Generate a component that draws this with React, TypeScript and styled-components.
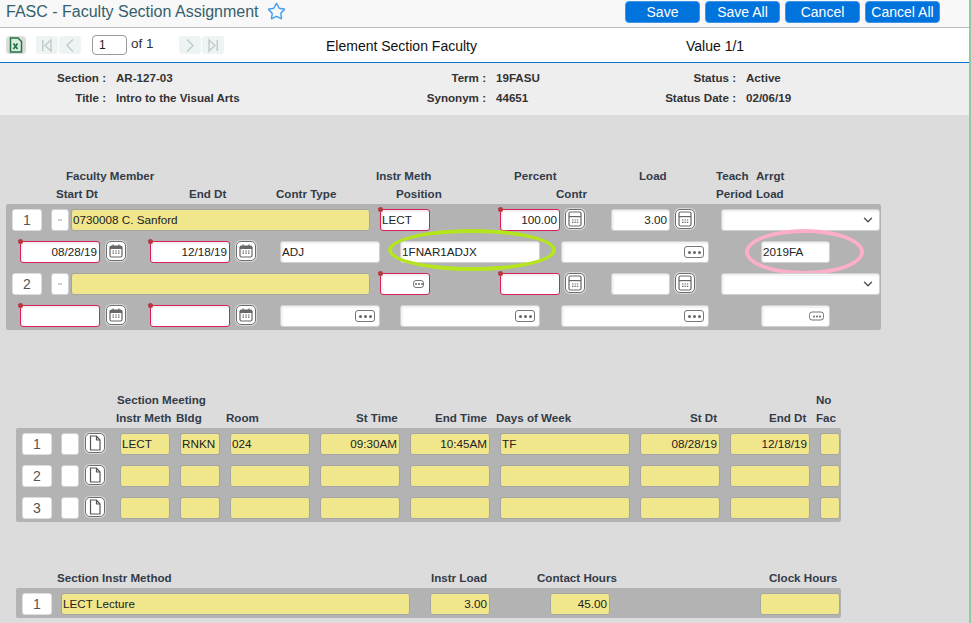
import React from "react";
import styled, { createGlobalStyle } from "styled-components";
import { Star, ChevronDown } from "lucide-react";

const GlobalStyle = createGlobalStyle`
  html, body {
    margin: 0;
    padding: 0;
    background: #dcdcdc;
    overflow: hidden;
  }
  * { box-sizing: border-box; }
`;

const Page = styled.div`
  width: 971px;
  height: 623px;
  overflow: hidden;
  font-family: "Liberation Sans", Arial, sans-serif;
  background: #dcdcdc;
  border-right: 2px solid #8ccf9d;
`;

const TitleBar = styled.div`
  height: 28px;
  display: flex;
  align-items: flex-start;
  padding-left: 6px;
  background: #f8f8f8;
  border-bottom: 1px solid #bcbcbc;
`;

const Title = styled.div`
  font-size: 16px;
  line-height: 23px;
  color: #34606c;
  white-space: nowrap;
`;

const StarIcon = styled(Star)`
  margin: 2px 0 0 8px;
  color: #459ef0;
`;

const Actions = styled.div`
  margin-left: auto;
  margin-right: 29px;
  margin-top: 1px;
  display: flex;
  gap: 5px;
`;

const ActionButton = styled.button`
  width: 75px;
  height: 22px;
  padding: 0;
  border: 1px solid #3f96e6;
  border-radius: 4px;
  background: #0073dc;
  color: #fff;
  font-family: inherit;
  font-size: 14px;
`;

const Toolbar = styled.div`
  height: 35px;
  display: flex;
  align-items: center;
  padding-left: 6px;
  background: #fff;
  border-bottom: 1px solid #0a6fd0;
`;

const ExcelButton = styled.div`
  width: 20px;
  height: 18px;
  border-radius: 4px;
  background: #dcdcdc;
  display: flex;
  align-items: center;
  justify-content: center;
`;

const NavButton = styled.div<{ $ml: number }>`
  width: 22px;
  height: 18px;
  margin-left: ${(p) => p.$ml}px;
  border-radius: 3px;
  background: #eef3f3;
  display: flex;
  align-items: center;
  justify-content: center;
`;

const PageInput = styled.div`
  width: 35px;
  height: 20px;
  margin-left: 11px;
  padding-left: 6px;
  border: 1px solid #9a9a9a;
  border-radius: 4px;
  font-size: 12px;
  line-height: 18px;
  color: #222;
`;

const PageCount = styled.div`
  width: 48px;
  margin-left: 4px;
  margin-top: -3px;
  font-size: 13.5px;
  color: #333;
`;

const Caption = styled.div<{ $w: number; $ml: number }>`
  width: ${(p) => p.$w}px;
  margin-left: ${(p) => p.$ml}px;
  margin-top: 2px;
  font-size: 14px;
  color: #111;
  white-space: nowrap;
`;

const InfoBand = styled.div`
  height: 52px;
  padding-top: 4px;
  background: #eee;
`;

const InfoRow = styled.div`
  height: 20px;
  display: flex;
  align-items: center;
  font-size: 11.6px;
  font-weight: bold;
  color: #333;
`;

const InfoLabel = styled.div<{ $w: number }>`
  width: ${(p) => p.$w}px;
  text-align: right;
  white-space: nowrap;
`;

const InfoValue = styled.div<{ $w: number }>`
  width: ${(p) => p.$w}px;
  margin-left: 10px;
  white-space: nowrap;
`;

const Section = styled.div<{ $mt: number }>`
  margin-top: ${(p) => p.$mt}px;
`;

const HeadRow = styled.div<{ $pl: number }>`
  height: 18px;
  padding-left: ${(p) => p.$pl}px;
  display: flex;
  align-items: center;
  font-size: 11.6px;
  font-weight: bold;
  color: #333b48;
`;

const HeadCell = styled.div<{ $w: number }>`
  flex: 0 0 ${(p) => p.$w}px;
  white-space: nowrap;
`;

const Panel = styled.div<{ $ml: number; $w: number; $mt: number }>`
  width: ${(p) => p.$w}px;
  margin-left: ${(p) => p.$ml}px;
  margin-top: ${(p) => p.$mt}px;
  padding: 5px 0 3px;
  display: flex;
  flex-direction: column;
  gap: 10px;
  background: #b3b3b3;
  border-radius: 2px;
`;

const Row = styled.div`
  height: 22px;
  display: flex;
`;

type Kind = "plain" | "yellow" | "required";

const Field = styled.div<{ $w: number; $ml: number; $kind?: Kind; $right?: boolean }>`
  position: relative;
  flex: 0 0 ${(p) => p.$w}px;
  height: 22px;
  margin-left: ${(p) => p.$ml}px;
  padding: 0 2px 0 1px;
  font-size: 11.7px;
  line-height: 20px;
  color: #222;
  white-space: nowrap;
  text-align: ${(p) => (p.$right ? "right" : "left")};
  border-radius: 3px;
  border: 1px solid
    ${(p) =>
      p.$kind === "yellow" ? "#a5a5a5" : p.$kind === "required" ? "#d81e5b" : "#cfcfcf"};
  background: ${(p) => (p.$kind === "yellow" ? "#f0e68c" : "#fff")};
  box-shadow: ${(p) => (p.$kind === "yellow" ? "none" : "inset 2px 2px 0 #f3f3f3")};
`;

const RequiredDot = styled.span`
  position: absolute;
  left: -3px;
  top: -3px;
  width: 5px;
  height: 5px;
  border-radius: 50%;
  background: #b23a3f;
`;

const RowNumber = styled.div`
  flex: 0 0 30px;
  height: 22px;
  margin-left: 6px;
  border: 1px solid #dedede;
  border-radius: 3px;
  background: #fff;
  font-size: 14px;
  line-height: 20px;
  text-align: center;
  color: #555;
`;

const SmallBox = styled.div`
  flex: 0 0 18px;
  height: 22px;
  margin-left: 9px;
  border: 1px solid #cfcfcf;
  border-radius: 3px;
  background: #fff;
  display: flex;
  align-items: center;
  justify-content: center;
`;

const Dash = styled.span`
  width: 4px;
  height: 2px;
  background: #cfcfcf;
`;

const IconButton = styled.div<{ $ml: number }>`
  flex: 0 0 20px;
  height: 20px;
  margin-left: ${(p) => p.$ml}px;
  border: 1px solid #6e6e6e;
  border-radius: 5px;
  background: #fff;
  box-shadow: 0 0 0 1px #d8d8d8;
  display: flex;
  align-items: center;
  justify-content: center;
`;

const Ellipsis = styled.span<{ $w: number; $h: number; $right: number }>`
  position: absolute;
  right: ${(p) => p.$right}px;
  top: 50%;
  width: ${(p) => p.$w}px;
  height: ${(p) => p.$h}px;
  transform: translateY(-50%);
  border: 1px solid #777;
  border-radius: 3px;
  background: #fff;
  display: flex;
  align-items: center;
  justify-content: center;
  gap: ${(p) => (p.$w > 15 ? 2 : 1)}px;
`;

const EllipsisDot = styled.span<{ $size: number }>`
  width: ${(p) => p.$size}px;
  height: ${(p) => p.$size}px;
  border-radius: 50%;
  background: #666;
`;

const SelectArrow = styled(ChevronDown)`
  position: absolute;
  right: 4px;
  top: 3px;
  color: #555;
`;

const Ring = styled.span<{ $color: string; $l: number; $t: number; $w: number; $h: number }>`
  position: absolute;
  left: ${(p) => p.$l}px;
  top: ${(p) => p.$t}px;
  width: ${(p) => p.$w}px;
  height: ${(p) => p.$h}px;
  border: 4px solid ${(p) => p.$color};
  border-radius: 50%;
  pointer-events: none;
`;

function Dots({ size = "large", right }: { size?: "large" | "small" | "tiny"; right: number }) {
  const dot = size === "large" ? 3 : 2;
  const w = size === "large" ? 20 : size === "small" ? 15 : 11;
  const h = size === "large" ? 12 : size === "small" ? 9 : 8;
  return (
    <Ellipsis $w={w} $h={h} $right={right}>
      <EllipsisDot $size={dot} />
      <EllipsisDot $size={dot} />
      <EllipsisDot $size={dot} />
    </Ellipsis>
  );
}

function CalendarIcon() {
  return (
    <svg width="14" height="14" viewBox="0 0 14 14">
      <rect x="1" y="2" width="12" height="11" rx="1.5" fill="none" stroke="#666" strokeWidth="1.2" />
      <rect x="1" y="2" width="12" height="3" fill="#666" />
      <rect x="3.5" y="0.5" width="1.2" height="2.5" fill="#666" />
      <rect x="9.3" y="0.5" width="1.2" height="2.5" fill="#666" />
      <path d="M3.5 7h1.5M6.3 7h1.5M9 7h1.5M3.5 9.2h1.5M6.3 9.2h1.5M9 9.2h1.5" stroke="#666" strokeWidth="1.2" />
    </svg>
  );
}

function CalcIcon() {
  return (
    <svg width="14" height="16" viewBox="0 0 14 16">
      <rect x="1" y="1" width="12" height="14" rx="1.5" fill="none" stroke="#666" strokeWidth="1.2" />
      <rect x="1" y="5" width="12" height="1.2" fill="#666" />
      <path d="M4 9h1.4M6.4 9h1.4M8.8 9h1.4M4 11.3h1.4M6.4 11.3h1.4M8.8 11.3h1.4" stroke="#666" strokeWidth="1.2" />
    </svg>
  );
}

function DocIcon() {
  return (
    <svg width="14" height="16" viewBox="0 0 14 16">
      <path d="M2.500 1h6l3.500 4v10h-9.500z" fill="#fff" stroke="#555" strokeWidth="1.2" />
      <path d="M8.500 1v4h3.500" fill="none" stroke="#555" strokeWidth="1.2" />
    </svg>
  );
}

function ExcelIcon() {
  return (
    <svg width="14" height="16" viewBox="0 0 14 16">
      <path d="M1.500 1h7.500l3.500 3.500v10.500h-11z" fill="#dcebdf" stroke="#217346" strokeWidth="1.5" />
      <path d="M4.500 6.500l4 5.500M8.500 6.500l-4 5.500" stroke="#217346" strokeWidth="1.7" />
    </svg>
  );
}

function NavIcon({ dir, bar }: { dir: "left" | "right"; bar?: boolean }) {
  if (bar) {
    const triangle = dir === "left" ? "11,2 5,7.500 11,13" : "3,2 9,7.500 3,13";
    return (
      <svg width="14" height="15" viewBox="0 0 14 15">
        <polygon points={triangle} fill="none" stroke="#c3cbcb" strokeWidth="1.5" />
        <rect x={dir === "left" ? 2 : 10.500} y="2" width="1.5" height="11" fill="#c3cbcb" />
      </svg>
    );
  }
  const points = dir === "left" ? "10,1.500 4,7.500 10,13.500" : "4,1.500 10,7.500 4,13.500";
  return (
    <svg width="14" height="15" viewBox="0 0 14 15">
      <polyline points={points} fill="none" stroke="#c3cbcb" strokeWidth="1.5" />
    </svg>
  );
}

const meetingRows = [
  { n: 1, instr: "LECT", bldg: "RNKN", room: "024", st: "09:30AM", end: "10:45AM", days: "TF", sd: "08/28/19", ed: "12/18/19" },
  { n: 2 },
  { n: 3 },
] as { n: number; instr?: string; bldg?: string; room?: string; st?: string; end?: string; days?: string; sd?: string; ed?: string }[];

export default function App() {
  return (
    <Page>
      <GlobalStyle />
      <TitleBar>
        <Title>FASC - Faculty Section Assignment</Title>
        <StarIcon size={19} strokeWidth={1.8} />
        <Actions>
          <ActionButton>Save</ActionButton>
          <ActionButton>Save All</ActionButton>
          <ActionButton>Cancel</ActionButton>
          <ActionButton>Cancel All</ActionButton>
        </Actions>
      </TitleBar>

      <Toolbar>
        <ExcelButton>
          <ExcelIcon />
        </ExcelButton>
        <NavButton $ml={10}><NavIcon dir="left" bar /></NavButton>
        <NavButton $ml={1}><NavIcon dir="left" /></NavButton>
        <PageInput>1</PageInput>
        <PageCount>of 1</PageCount>
        <NavButton $ml={0}><NavIcon dir="right" /></NavButton>
        <NavButton $ml={1}><NavIcon dir="right" bar /></NavButton>
        <Caption $w={360} $ml={102}>Element Section Faculty</Caption>
        <Caption $w={100} $ml={0}>Value 1/1</Caption>
      </Toolbar>

      <InfoBand>
        <InfoRow>
          <InfoLabel $w={106}>Section :</InfoLabel>
          <InfoValue $w={260}>AR-127-03</InfoValue>
          <InfoLabel $w={110}>Term :</InfoLabel>
          <InfoValue $w={130}>19FASU</InfoValue>
          <InfoLabel $w={110}>Status :</InfoLabel>
          <InfoValue $w={100}>Active</InfoValue>
        </InfoRow>
        <InfoRow>
          <InfoLabel $w={106}>Title :</InfoLabel>
          <InfoValue $w={260}>Intro to the Visual Arts</InfoValue>
          <InfoLabel $w={110}>Synonym :</InfoLabel>
          <InfoValue $w={130}>44651</InfoValue>
          <InfoLabel $w={110}>Status Date :</InfoLabel>
          <InfoValue $w={100}>02/06/19</InfoValue>
        </InfoRow>
      </InfoBand>

      <Section $mt={51}>
        <HeadRow $pl={66}>
          <HeadCell $w={310}>Faculty Member</HeadCell>
          <HeadCell $w={138}>Instr Meth</HeadCell>
          <HeadCell $w={125}>Percent</HeadCell>
          <HeadCell $w={77}>Load</HeadCell>
          <HeadCell $w={40}>Teach</HeadCell>
          <HeadCell $w={40}>Arrgt</HeadCell>
        </HeadRow>
        <HeadRow $pl={56}>
          <HeadCell $w={133}>Start Dt</HeadCell>
          <HeadCell $w={87}>End Dt</HeadCell>
          <HeadCell $w={120}>Contr Type</HeadCell>
          <HeadCell $w={160}>Position</HeadCell>
          <HeadCell $w={160}>Contr</HeadCell>
          <HeadCell $w={40}>Period</HeadCell>
          <HeadCell $w={40}>Load</HeadCell>
        </HeadRow>
        <Panel $ml={6} $w={875} $mt={2}>
          <Row>
            <RowNumber>1</RowNumber>
            <SmallBox><Dash /></SmallBox>
            <Field $w={299} $ml={2} $kind="yellow">0730008 C. Sanford</Field>
            <Field $w={50} $ml={10} $kind="required"><RequiredDot />LECT</Field>
            <Field $w={60} $ml={70} $kind="required" $right><RequiredDot />100.00</Field>
            <IconButton $ml={5}><CalcIcon /></IconButton>
            <Field $w={59} $ml={26} $right>3.00</Field>
            <IconButton $ml={5}><CalcIcon /></IconButton>
            <Field $w={159} $ml={26}><SelectArrow size={14} strokeWidth={2.5} /></Field>
          </Row>
          <Row>
            <Field $w={80} $ml={14} $kind="required" $right><RequiredDot />08/28/19</Field>
            <IconButton $ml={6}><CalendarIcon /></IconButton>
            <Field $w={80} $ml={24} $kind="required" $right><RequiredDot />12/18/19</Field>
            <IconButton $ml={6}><CalendarIcon /></IconButton>
            <Field $w={100} $ml={24}>ADJ</Field>
            <Field $w={140} $ml={20}>
              1FNAR1ADJX
              <Ring $color="#b5e61d" $l={-13} $t={-13} $w={168} $h={42} />
            </Field>
            <Field $w={148} $ml={21}><Dots right={4} /></Field>
            <Field $w={69} $ml={52}>
              2019FA
              <Ring $color="#ffaec9" $l={-17} $t={-13} $w={119} $h={46} />
            </Field>
          </Row>
          <Row>
            <RowNumber>2</RowNumber>
            <SmallBox><Dash /></SmallBox>
            <Field $w={299} $ml={2} $kind="yellow" />
            <Field $w={50} $ml={10} $kind="required"><RequiredDot /><Dots size="tiny" right={5} /></Field>
            <Field $w={60} $ml={70} $kind="required"><RequiredDot /></Field>
            <IconButton $ml={5}><CalcIcon /></IconButton>
            <Field $w={59} $ml={26} />
            <IconButton $ml={5}><CalcIcon /></IconButton>
            <Field $w={159} $ml={26}><SelectArrow size={14} strokeWidth={2.5} /></Field>
          </Row>
          <Row>
            <Field $w={80} $ml={14} $kind="required"><RequiredDot /></Field>
            <IconButton $ml={6}><CalendarIcon /></IconButton>
            <Field $w={80} $ml={24} $kind="required"><RequiredDot /></Field>
            <IconButton $ml={6}><CalendarIcon /></IconButton>
            <Field $w={100} $ml={24}><Dots right={4} /></Field>
            <Field $w={140} $ml={20}><Dots right={4} /></Field>
            <Field $w={148} $ml={21}><Dots right={4} /></Field>
            <Field $w={69} $ml={52}><Dots size="small" right={5} /></Field>
          </Row>
        </Panel>
      </Section>

      <Section $mt={60}>
        <HeadRow $pl={117}>
          <HeadCell $w={699}>Section Meeting</HeadCell>
          <HeadCell $w={30}>No</HeadCell>
        </HeadRow>
        <HeadRow $pl={116}>
          <HeadCell $w={60}>Instr Meth</HeadCell>
          <HeadCell $w={50}>Bldg</HeadCell>
          <HeadCell $w={130}>Room</HeadCell>
          <HeadCell $w={79}>St Time</HeadCell>
          <HeadCell $w={61}>End Time</HeadCell>
          <HeadCell $w={194}>Days of Week</HeadCell>
          <HeadCell $w={79}>St Dt</HeadCell>
          <HeadCell $w={47}>End Dt</HeadCell>
          <HeadCell $w={30}>Fac</HeadCell>
        </HeadRow>
        <Panel $ml={16} $w={825} $mt={2}>
          {meetingRows.map((r) => (
            <Row key={r.n}>
              <RowNumber>{r.n}</RowNumber>
              <SmallBox />
              <IconButton $ml={6}><DocIcon /></IconButton>
              <Field $w={50} $ml={15} $kind="yellow">{r.instr}</Field>
              <Field $w={40} $ml={10} $kind="yellow">{r.bldg}</Field>
              <Field $w={80} $ml={10} $kind="yellow">{r.room}</Field>
              <Field $w={80} $ml={10} $kind="yellow" $right>{r.st}</Field>
              <Field $w={80} $ml={10} $kind="yellow" $right>{r.end}</Field>
              <Field $w={130} $ml={10} $kind="yellow">{r.days}</Field>
              <Field $w={80} $ml={10} $kind="yellow" $right>{r.sd}</Field>
              <Field $w={80} $ml={10} $kind="yellow" $right>{r.ed}</Field>
              <Field $w={20} $ml={10} $kind="yellow" />
            </Row>
          ))}
        </Panel>
      </Section>

      <Section $mt={46}>
        <HeadRow $pl={57}>
          <HeadCell $w={374}>Section Instr Method</HeadCell>
          <HeadCell $w={106}>Instr Load</HeadCell>
          <HeadCell $w={232}>Contact Hours</HeadCell>
          <HeadCell $w={70}>Clock Hours</HeadCell>
        </HeadRow>
        <Panel $ml={16} $w={825} $mt={2}>
          <Row>
            <RowNumber>1</RowNumber>
            <Field $w={349} $ml={9} $kind="yellow">LECT Lecture</Field>
            <Field $w={60} $ml={20} $kind="yellow" $right>3.00</Field>
            <Field $w={60} $ml={60} $kind="yellow" $right>45.00</Field>
            <Field $w={80} $ml={150} $kind="yellow" />
          </Row>
        </Panel>
      </Section>
    </Page>
  );
}
